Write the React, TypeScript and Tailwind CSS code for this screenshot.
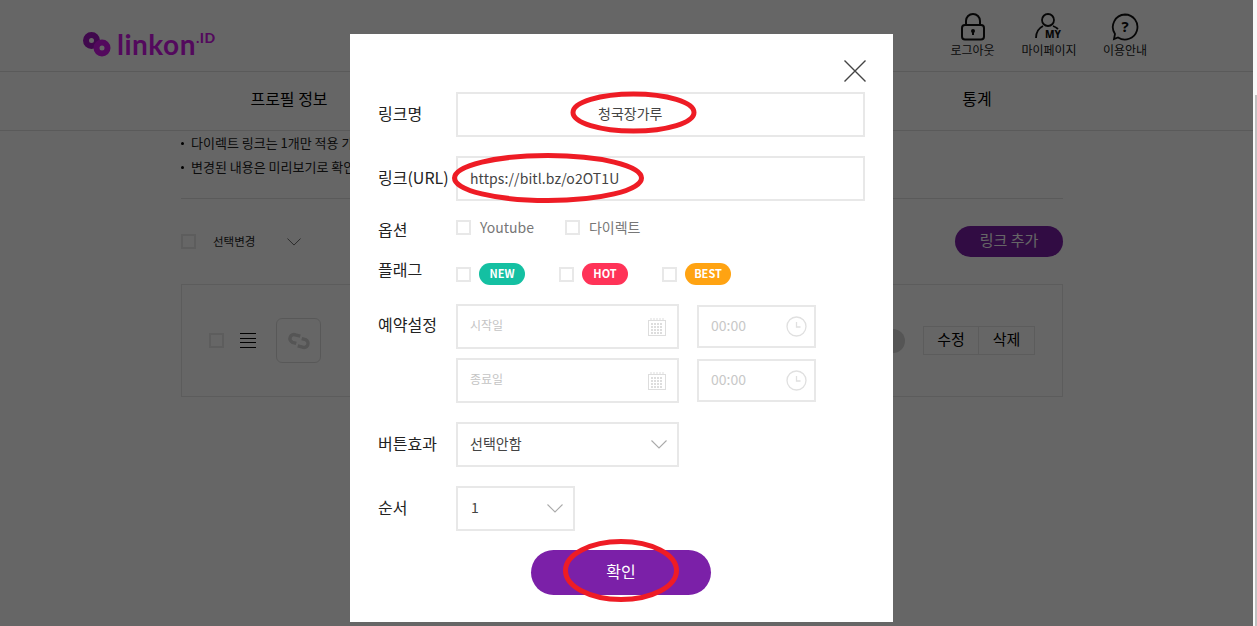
import React from 'react';

const font = 'font-["Noto_Sans_CJK_KR","Noto_Sans",sans-serif]';

const Check = ({ className = '' }: { className?: string }) => (
  <span className={`block w-[15px] h-[15px] border-2 border-[#e8e8e8] bg-white shrink-0 ${className}`} />
);

const Chevron = ({ className = '', color = '#aaa' }: { className?: string; color?: string }) => (
  <svg width="16" height="9" viewBox="0 0 16 9" fill="none" stroke={color} strokeWidth="1.1" className={`shrink-0 ${className}`}>
    <path d="M.5.5 8 8 15.5.5" />
  </svg>
);

const CalendarIcon = () => (
  <svg width="18" height="18" viewBox="0 0 18 18" fill="none" className="shrink-0">
    <rect x="0.5" y="2.5" width="17" height="15" stroke="#ddd" />
    <path d="M3 0v3M6 0v3M9 0v3M12 0v3M15 0v3" stroke="#ddd" />
    <path d="M3 6h12M3 9h12M3 12h12M3 15h12" stroke="#ddd" strokeWidth="2" strokeDasharray="2 1" />
  </svg>
);

const ClockIcon = () => (
  <svg width="21" height="21" viewBox="0 0 21 21" fill="none" className="shrink-0">
    <circle cx="10.5" cy="10.5" r="9.5" stroke="#e0e0e0" strokeWidth="1.3" />
    <path d="M10.5 6v5h4" stroke="#e0e0e0" strokeWidth="1.3" />
  </svg>
);

const Logo = () => (
  <div className="flex items-start">
    <svg width="28" height="25" viewBox="0 0 28 25" fill="none" className="mt-[6px]">
      <circle cx="8.5" cy="8.5" r="5.5" stroke="#a014c0" strokeWidth="6" />
      <circle cx="19" cy="16" r="5.5" stroke="#d018e8" strokeWidth="6" />
    </svg>
    <span className="ml-[6px] text-[28px] leading-[34px] mt-[1px] font-['Lato',sans-serif] font-bold text-[#d018e8] tracking-[0.5px]">linkon</span>
    <span className="text-[14px] leading-none mt-[5px] tracking-[0.5px] font-['Lato',sans-serif] font-black text-[#d018e8]">.ID</span>
  </div>
);

const LockIcon = () => (
  <svg width="24" height="28" viewBox="0 0 24 28" fill="none" stroke="#111" strokeWidth="2">
    <rect x="1" y="12" width="22" height="14.5" rx="3" />
    <path d="M5 12V8a7 7 0 0 1 14 0v4" />
    <path d="M12 18v4" strokeWidth="2" />
    <circle cx="12" cy="18" r="1" fill="#111" />
  </svg>
);

const MyIcon = () => (
  <svg width="28" height="28" viewBox="0 0 28 28" fill="none" stroke="#111" strokeWidth="1.8">
    <circle cx="13" cy="7" r="6" />
    <path d="M1 25c0-6 3-10 7-12M18 13c2 .7 4 2 5 3" />
    <text x="10" y="25" fontSize="10" fontWeight="800" fill="#111" stroke="none" fontFamily="Noto Sans">MY</text>
  </svg>
);

const HelpIcon = () => (
  <svg width="28" height="28" viewBox="0 0 28 28" fill="none" stroke="#111" strokeWidth="1.8">
    <path d="M14 1.5a12.5 12.5 0 1 1-7 22.9L3 26l1-5A12.5 12.5 0 0 1 14 1.5z" />
    <text x="14" y="19" textAnchor="middle" fontSize="15" fontWeight="700" fill="#111" stroke="none" fontFamily="Noto Sans">?</text>
  </svg>
);

const LinkIcon = () => (
  <svg width="24" height="20" viewBox="0 0 24 20" fill="none" stroke="#d4d4d4" strokeWidth="3.4">
    <path d="M12 5H7a4 4 0 0 0-1 8h4" transform="rotate(15 12 10)" />
    <path d="M12 15h5a4 4 0 0 0 1-8h-4" transform="rotate(15 12 10)" />
  </svg>
);

const Background = () => (
  <div className="w-[1253px] shrink-0 bg-white text-black">
    <header className="h-[72px] border-b border-[#e2e2e2] flex justify-between pl-[83px] pr-[90px]">
      <div className="pt-[26px]"><Logo /></div>
      <div className="flex pt-[13px]">
        {[
          { label: '로그아웃', icon: <LockIcon />, w: 'w-[77px]' },
          { label: '마이페이지', icon: <MyIcon />, w: 'w-[76px]' },
          { label: '이용안내', icon: <HelpIcon />, w: 'w-[76px]' },
        ].map((item) => (
          <div key={item.label} className={`${item.w} flex flex-col items-center`}>
            <div className="h-[28px] flex items-end">{item.icon}</div>
            <span className="text-[12px] leading-[16px] mt-[1px] text-[#222]">{item.label}</span>
          </div>
        ))}
      </div>
    </header>
    <nav className="h-[59px] pb-[7px] border-b border-[#e2e2e2] grid grid-cols-5 items-center pl-[203px] pr-[190px] text-[16px]">
      <span className="text-center">프로필 정보</span>
      <span className="text-center col-start-5">통계</span>
    </nav>
    <div className="pl-[181px] pr-[190px]">
      <ul className="pb-[19px] border-b border-[#e2e2e2] text-[13px] leading-[24px] text-[#222]">
        <li className="flex items-center gap-[7px]"><span className="w-[3px] h-[3px] rounded-full bg-black" />다이렉트 링크는 1개만 적용 가능</li>
        <li className="flex items-center gap-[7px]"><span className="w-[3px] h-[3px] rounded-full bg-black" />변경된 내용은 미리보기로 확인</li>
      </ul>
      <div className="h-[27px]" />
      <div className="flex items-center justify-between h-[31px]">
        <div className="flex items-center">
          <Check />
          <span className="ml-[17px] text-[11.5px] text-[#222]">선택변경</span>
          <Chevron className="ml-[32px] w-[14px] h-[8px]" color="#666" />
        </div>
        <button className="w-[108px] h-[31px] pb-[2px] rounded-full bg-[#7b20a8] text-white text-[15px]">링크 추가</button>
      </div>
      <div className="mt-[27px] h-[113px] border border-[#e6e6e6] flex items-center pl-[27px] pr-[27px]">
        <Check />
        <div className="ml-[16px] w-[16px] flex flex-col gap-[3.5px]">
          <span className="h-px bg-black" /><span className="h-px bg-black" /><span className="h-px bg-black" /><span className="h-px bg-black" />
        </div>
        <div className="ml-[20px] w-[45px] h-[45px] border border-[#ddd] rounded-[6px] flex items-center justify-center">
          <LinkIcon />
        </div>
        <div className="flex-1" />
        <span className="w-[24px] h-[24px] rounded-full bg-[#d4d4d4] mr-[18px]" />
        <div className="flex text-[15px] text-black">
          <span className="w-[56px] h-[29px] pb-[2px] border border-[#e6e6e6] flex items-center justify-center">수정</span>
          <span className="w-[56px] h-[29px] pb-[2px] border border-l-0 border-[#e6e6e6] flex items-center justify-center">삭제</span>
        </div>
      </div>
    </div>
  </div>
);

const Label = ({ children, className = 'pb-[4px]' }: { children: React.ReactNode; className?: string }) => (
  <span className={`w-[78px] shrink-0 text-[16px] text-[#222] ${className}`}>{children}</span>
);

const Field = ({ children, className = '' }: { children: React.ReactNode; className?: string }) => (
  <div className={`border-2 border-[#e8e8e8] flex items-center bg-white ${className}`}>{children}</div>
);

const Modal = () => (
  <div className="absolute left-[350px] top-[34px] w-[543px] h-[588px] bg-white px-[28px] pt-[58px]">
    <svg width="22" height="22" viewBox="0 0 22 22" fill="none" stroke="#444" strokeWidth="1.4" className="absolute right-[27px] top-[26px]">
      <path d="M.5.5l21 21M21.5.5l-21 21" />
    </svg>
    <div className="flex items-center">
      <Label>링크명</Label>
      <Field className="w-[409px] h-[45px] pl-[140px] pb-[2px] text-[14px] text-[#444]">청국장가루</Field>
    </div>
    <div className="flex items-center mt-[19px]">
      <Label>링크(URL)</Label>
      <Field className="w-[409px] h-[45px] pl-[12px] text-[14px] tracking-[0.1px] text-[#444]">https://bitl.bz/o2OT1U</Field>
    </div>
    <div className="flex items-center mt-[19px] h-[15px]">
      <Label className="pt-[2px]">옵션</Label>
      <Check />
      <span className="ml-[9px] text-[14px] text-[#777]">Youtube</span>
      <Check className="ml-[31px]" />
      <span className="ml-[9px] text-[14px] text-[#777]">다이렉트</span>
    </div>
    <div className="flex items-center mt-[28px] h-[22px]">
      <Label className="pb-[10px]">플래그</Label>
      {[
        { t: 'NEW', c: 'bg-[#14c0a2]' },
        { t: 'HOT', c: 'bg-[#ff3358]' },
        { t: 'BEST', c: 'bg-[#ffa312]' },
      ].map((f) => (
        <div key={f.t} className="flex items-center w-[103px]">
          <Check />
          <span className={`ml-[8px] w-[46px] h-[22px] pb-[2px] rounded-full ${f.c} text-white text-[11px] font-bold flex items-center justify-center`}>{f.t}</span>
        </div>
      ))}
    </div>
    <div className="flex mt-[19px]">
      <Label className="pt-[8px]">예약설정</Label>
      <div className="flex flex-col gap-[9px]">
        {['시작일', '종료일'].map((p) => (
          <div key={p} className="flex items-center gap-[18px]">
            <Field className="w-[223px] h-[45px] pl-[12px] pr-[11px] justify-between text-[12px] text-[#c4c4c4]"><span className="pb-[3px]">{p}</span><CalendarIcon /></Field>
            <Field className="w-[119px] h-[43px] pl-[12px] pr-[7px] justify-between text-[14px] text-[#c8c8c8]"><span className="pb-[2px]">00:00</span><ClockIcon /></Field>
          </div>
        ))}
      </div>
    </div>
    <div className="flex items-center mt-[19px]">
      <Label>버튼효과</Label>
      <Field className="w-[223px] h-[45px] pl-[12px] pr-[10px] justify-between text-[14px] text-[#444]"><span className="pb-[3px]">선택안함</span><Chevron /></Field>
    </div>
    <div className="flex items-center mt-[19px]">
      <Label>순서</Label>
      <Field className="w-[119px] h-[45px] pl-[13px] pr-[10px] justify-between text-[14px] text-[#444]"><span className="pb-[3px]">1</span><Chevron /></Field>
    </div>
    <div className="flex justify-center mt-[19px] pr-[1px]">
      <button className="w-[180px] h-[45px] pb-[3px] rounded-full bg-[#7b20a8] text-white text-[16px]">확인</button>
    </div>
  </div>
);

export default function App() {
  return (
    <div className={`relative w-[1257px] h-[626px] overflow-hidden flex bg-white ${font}`}>
      <Background />
      <div className="w-[4px] shrink-0 bg-[#f8f8f8] pt-[95px] pl-[2px]">
        <div className="h-full bg-[#c1c1c1]" />
      </div>
      <div className="absolute left-0 top-0 w-[1253px] h-full bg-black/60" />
      <Modal />
      {/* red marker circles drawn over the screenshot */}
      <svg className="absolute inset-0 pointer-events-none" width="1257" height="626" fill="none" stroke="#ee1c25" strokeWidth="5">
        <ellipse cx="633.5" cy="112.5" rx="60.5" ry="18.5" />
        <ellipse cx="548" cy="178" rx="93.5" ry="22.5" />
        <ellipse cx="621" cy="570.5" rx="55.5" ry="29" />
      </svg>
    </div>
  );
}
